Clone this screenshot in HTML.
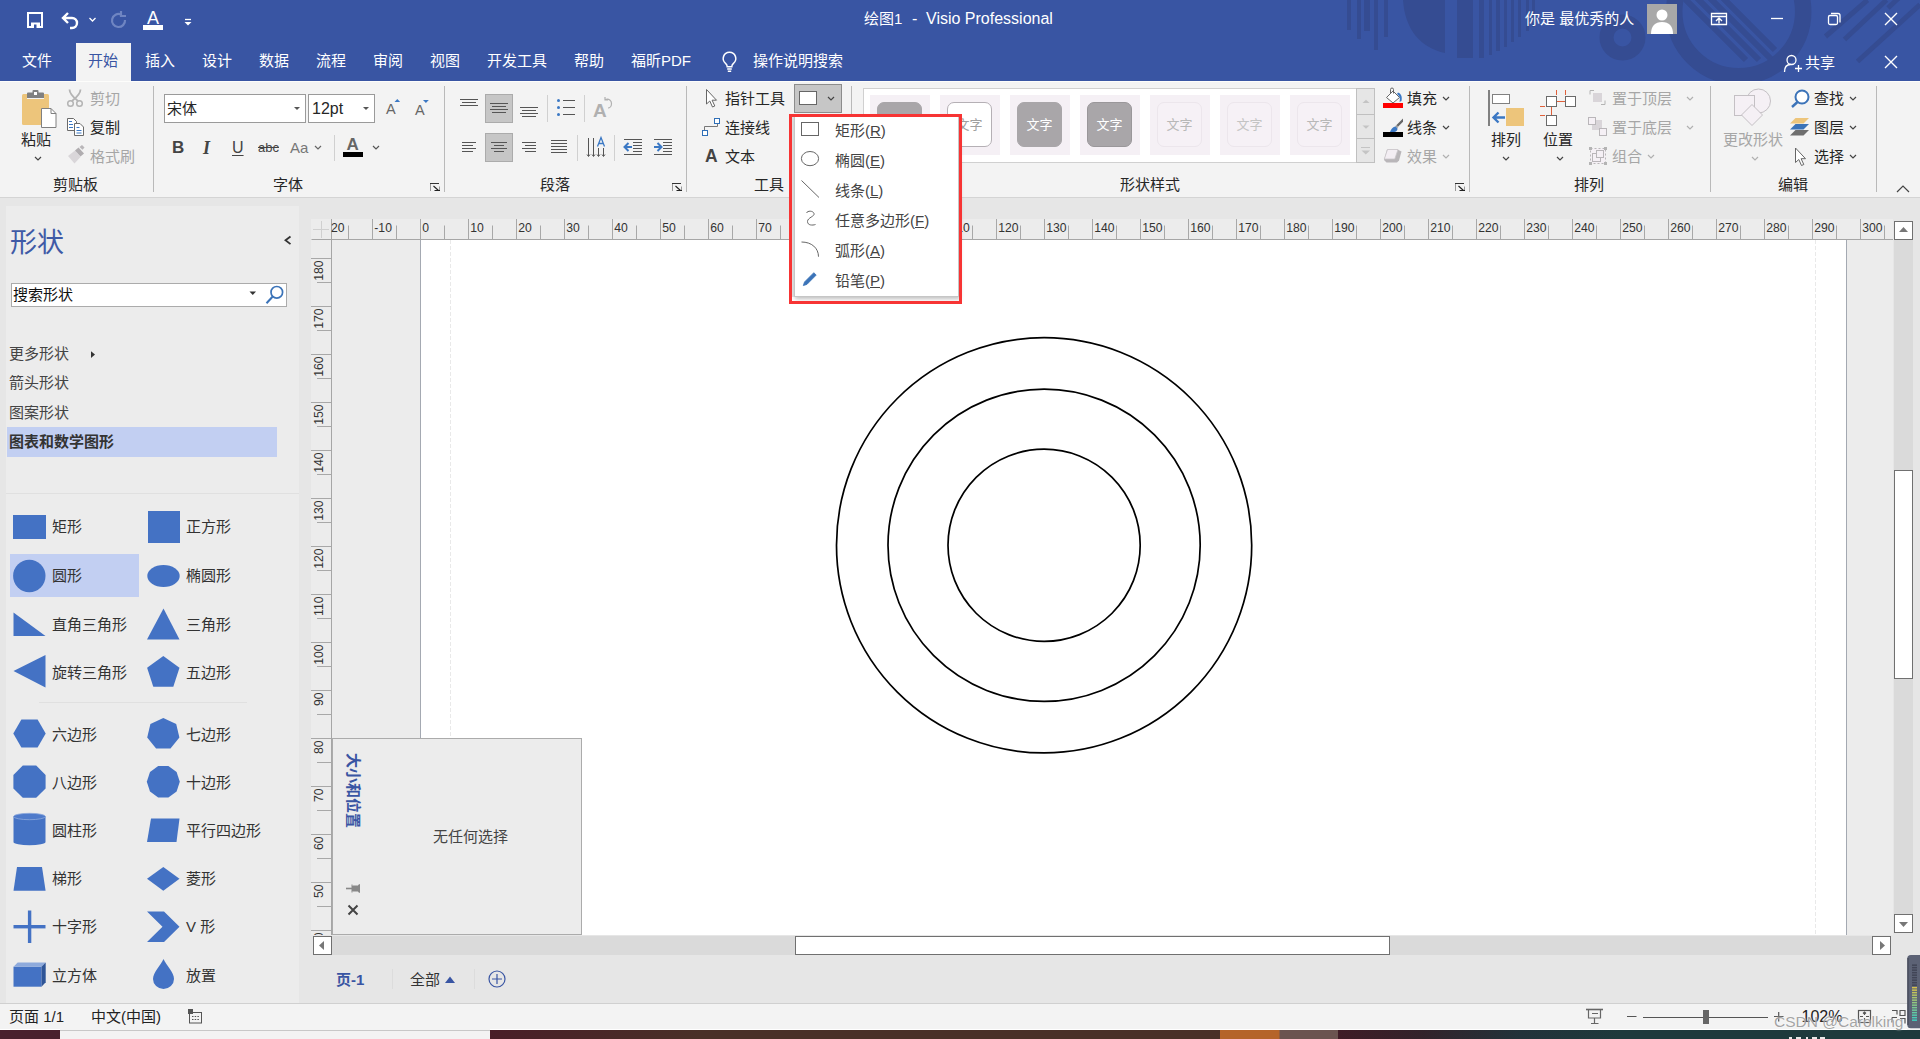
<!DOCTYPE html>
<html lang="zh-CN">
<head>
<meta charset="utf-8">
<title>绘图1 - Visio Professional</title>
<style>
*{box-sizing:border-box;margin:0;padding:0}
html,body{width:1920px;height:1039px;overflow:hidden;background:#e6e6e6}
body{position:relative;font-family:"Liberation Sans","Noto Sans CJK SC",sans-serif;font-size:15px;color:#262626;line-height:1}
.a{position:absolute}
.t{position:absolute;white-space:nowrap;line-height:20px;height:20px}
svg{position:absolute;overflow:visible}
#hdr{left:0;top:0;width:1920px;height:81px;background:#3955a3;overflow:hidden}
#hdr .t{color:#fff}
#rib{left:0;top:81px;width:1920px;height:117px;background:#f3f3f3;border-bottom:1px solid #d4d4d4}
.sep{position:absolute;top:5px;width:1px;height:105px;background:#c8c8c8}
.dis{color:#a6a6a6}
.gl{top:94px;color:#262626}
/* left panel */
#lp{left:4px;top:206px;width:295px;height:797px;background:#ececec}
/* canvas */
#ws{left:311px;top:219px;width:1582px;height:716px;background:#ececec}
</style>
</head>
<body>
<!--HDR-->
<div id="hdr" class="a">
<svg style="left:0;top:0" width="1920" height="81" viewBox="0 0 1920 81">
<defs><clipPath id="hc"><circle cx="1738.700" cy="11.700" r="56.500"/></clipPath></defs>
<g fill="#354c92" stroke="none">
<rect x="1347" y="0" width="4" height="30"/><rect x="1357" y="0" width="4" height="39"/><rect x="1364" y="0" width="6" height="31"/><rect x="1374" y="0" width="4" height="50"/><rect x="1384" y="0" width="4" height="37"/>
<path d="M1403 0c2 30 18 48 42 53v-53z"/><rect x="1457" y="0" width="16" height="58"/>
<rect x="1479" y="0" width="5" height="58"/><rect x="1489" y="0" width="3" height="55"/><rect x="1496" y="0" width="4" height="51"/><rect x="1504" y="0" width="3" height="47"/><rect x="1511" y="0" width="3" height="42"/><rect x="1518" y="0" width="3" height="37"/><rect x="1526" y="0" width="3" height="31"/><rect x="1532" y="0" width="3" height="27"/>
</g>
<g fill="none" stroke="#354c92">
<circle cx="1622.500" cy="37.500" r="16" stroke-width="14"/>
<circle cx="1738.700" cy="11.700" r="64.500" stroke-width="16.500"/>
<g stroke-width="6" clip-path="url(#hc)"><path d="M1666 -20l80 80M1679 -20l80 80M1692 -20l80 80M1705 -20l70 70"/></g>
<g stroke-width="5"><path d="M1867.500 0l-42 36.500M1886.500 0l-42 39.500M1920 4.500l-62.500 57M1920 -22l-32 30"/></g>
</g></svg>
<div class="a" style="left:76px;top:43px;width:55px;height:38px;background:#f3f3f3"></div>
<div class="t" style="left:88px;top:51px;color:#3955a3">开始</div>
<div class="t" style="left:22px;top:51px">文件</div>
<div class="t" style="left:145px;top:51px">插入</div>
<div class="t" style="left:202px;top:51px">设计</div>
<div class="t" style="left:259px;top:51px">数据</div>
<div class="t" style="left:316px;top:51px">流程</div>
<div class="t" style="left:373px;top:51px">审阅</div>
<div class="t" style="left:430px;top:51px">视图</div>
<div class="t" style="left:487px;top:51px">开发工具</div>
<div class="t" style="left:574px;top:51px">帮助</div>
<div class="t" style="left:631px;top:51px">福昕PDF</div>
<div class="t" style="left:753px;top:51px">操作说明搜索</div>
<div class="t" style="left:864px;top:9px">绘图1</div><div class="t" style="left:912px;top:9px;font-size:16px">-</div><div class="t" style="left:926px;top:9px;font-size:16px">Visio Professional</div>
<div class="t" style="left:1525px;top:9px">你是 最优秀的人</div>
<div class="t" style="left:1805px;top:53px">共享</div>
<svg style="left:0;top:0" width="1920" height="81" viewBox="0 0 1920 81" fill="none" stroke="#fff">
<!-- save -->
<path d="M28 13h14v14h-14z" stroke-width="2"/><path d="M31 28v-5.500h9v5.500z" fill="#fff" stroke="none"/><rect x="34" y="24.500" width="2.500" height="3.500" fill="#3955a3" stroke="none"/>
<!-- undo -->
<path d="M68 13l-5 5 5 5M63.5 18h8.500a5 5 0 0 1 0 10h-2" stroke-width="2.4"/>
<path d="M89.500 18l3 3 3-3" stroke-width="1.300"/>
<!-- redo -->
<path d="M121 14.500a6.500 6.500 0 1 0 4 5.500M121 11v5h5" stroke="#6f85c2" stroke-width="2.200"/>
<!-- A underline -->
<rect x="143" y="25" width="20" height="5" fill="#fff" stroke="none"/>
<!-- customize -->
<path d="M185 19.500h6" stroke-width="1.300"/><path d="M184.500 22h7l-3.500 3.500z" fill="#fff" stroke="none"/>
<!-- bulb -->
<path d="M729.500 52.300a6.200 6.200 0 0 0-4 11c1.200 1 1.700 1.900 1.700 3.400h4.600c0-1.500.5-2.400 1.700-3.400a6.200 6.200 0 0 0-4-11zM727.200 69h4.600M727.800 71.300h3.400" stroke-width="1.500"/>
<!-- avatar -->
<rect x="1647" y="4" width="30" height="30" fill="#a8a8a8" stroke="none"/>
<circle cx="1662" cy="15" r="5.500" fill="#fff" stroke="none"/><path d="M1651 34c0-8 4-12 11-12s11 4 11 12z" fill="#fff" stroke="none"/>
<!-- ribbon display -->
<path d="M1711.500 13.500h15v11h-15zM1711.500 16.500h15" stroke-width="1.300"/><path d="M1719 23.500v-5.500M1716 21l3-3 3 3" stroke-width="1.400"/>
<!-- minimize -->
<path d="M1771 18.500h12" stroke-width="1.300"/>
<!-- restore -->
<rect x="1828.500" y="15.500" width="9" height="9" rx="1.500" stroke-width="1.300"/><path d="M1831 13.500h7a2 2 0 0 1 2 2v7" stroke-width="1.300"/>
<!-- close -->
<path d="M1885 13l12 12M1897 13l-12 12" stroke-width="1.400"/>
<path d="M1885 56l12 12M1897 56l-12 12" stroke-width="1.400"/>
<!-- share person -->
<circle cx="1791.500" cy="60" r="4.500" stroke-width="1.300"/><path d="M1784.500 72c0-5 2.500-7.500 6-7.500M1795 68.500h7M1798.500 65v7" stroke-width="1.300"/>
</svg>
<div class="t" style="left:147px;top:7px;font-size:18px;line-height:22px;height:22px">A</div>
</div>
<!--RIB-->
<div id="rib" class="a">
<!--RIBCONTENT-->
</div>
<!--RC0--><div class="a" id="rc" style="left:0;top:0;width:1920px;height:200px">
<div class="a" style="left:0px;top:81px;width:1920px;height:1px;background:#fdfdfb"></div>
<div class="a" style="left:153px;top:86px;width:1px;height:106px;background:#b9b9b9"></div>
<div class="a" style="left:444px;top:86px;width:1px;height:106px;background:#b9b9b9"></div>
<div class="a" style="left:686px;top:86px;width:1px;height:106px;background:#b9b9b9"></div>
<div class="a" style="left:851px;top:86px;width:1px;height:106px;background:#b9b9b9"></div>
<div class="a" style="left:1469px;top:86px;width:1px;height:106px;background:#b9b9b9"></div>
<div class="a" style="left:1710px;top:86px;width:1px;height:106px;background:#b9b9b9"></div>
<div class="a" style="left:1876px;top:86px;width:1px;height:106px;background:#b9b9b9"></div>
<div class="t " style="left:53px;top:175px;">剪贴板</div>
<div class="t " style="left:273px;top:175px;">字体</div>
<div class="t " style="left:540px;top:175px;">段落</div>
<div class="t " style="left:754px;top:175px;">工具</div>
<div class="t " style="left:1120px;top:175px;">形状样式</div>
<div class="t " style="left:1574px;top:175px;">排列</div>
<div class="t " style="left:1778px;top:175px;">编辑</div>
<div class="t " style="left:21px;top:130px;">粘贴</div>
<div class="t dis" style="left:90px;top:89px;">剪切</div>
<div class="t " style="left:90px;top:117.5px;">复制</div>
<div class="t dis" style="left:90px;top:147px;">格式刷</div>
<div class="a" style="left:164px;top:94px;width:142px;height:29px;background:#fff;border:1px solid #9a9a9a"></div>
<div class="a" style="left:308px;top:94px;width:67px;height:29px;background:#fff;border:1px solid #9a9a9a"></div>
<div class="t " style="left:167px;top:99px;">宋体</div>
<div class="t " style="left:312px;top:99px;font-size:16px">12pt</div>
<div class="t " style="left:172px;top:138px;font-weight:bold;font-size:17px;color:#444">B</div>
<div class="t " style="left:203px;top:138px;font-family:'Liberation Serif',serif;font-style:italic;font-weight:bold;font-size:18px;color:#444">I</div>
<div class="t " style="left:232px;top:138px;font-size:16px;color:#444;text-decoration:underline;text-underline-offset:2px">U</div>
<div class="t " style="left:258px;top:138px;font-size:13px;color:#444;text-decoration:line-through">abc</div>
<div class="t " style="left:290px;top:138px;font-size:15px;color:#777">Aa</div>
<div class="t " style="left:386px;top:99px;font-size:14.5px;color:#666">A</div>
<div class="t " style="left:415px;top:100px;font-size:14.5px;color:#666">A</div>
<div class="t " style="left:346.5px;top:135px;font-size:17px;font-weight:bold;color:#666">A</div>
<div class="a" style="left:343px;top:152px;width:20px;height:5px;background:#000"></div>
<div class="a" style="left:334px;top:135px;width:1px;height:26px;background:#d0d0d0"></div>
<div class="a" style="left:485px;top:94px;width:28px;height:29px;background:#c6c6c6;border:1px solid #ababab"></div>
<div class="a" style="left:485px;top:133px;width:28px;height:29px;background:#c6c6c6;border:1px solid #ababab"></div>
<div class="a" style="left:547px;top:95px;width:1px;height:27px;background:#d0d0d0"></div>
<div class="a" style="left:584px;top:95px;width:1px;height:27px;background:#d0d0d0"></div>
<div class="a" style="left:577px;top:135px;width:1px;height:26px;background:#d0d0d0"></div>
<div class="a" style="left:614px;top:135px;width:1px;height:26px;background:#d0d0d0"></div>
<div class="t " style="left:725px;top:89px;">指针工具</div>
<div class="t " style="left:725px;top:118px;">连接线</div>
<div class="t " style="left:725px;top:147px;">文本</div>
<div class="t " style="left:705px;top:146px;font-weight:bold;font-size:17.5px;color:#444">A</div>
<div class="t " style="left:593px;top:100.5px;font-weight:bold;font-size:19px;color:#b0b0b0">A</div>
<div class="a" style="left:794px;top:84px;width:48px;height:29px;background:#c6c6c6;border:1px solid #8c8c8c"></div>
<div class="a" style="left:799px;top:91px;width:18px;height:14px;background:#fff;border:1px solid #666"></div>
<div class="a" style="left:863px;top:88px;width:494px;height:75px;background:#fff;border:1px solid #d0d0d0"></div>
<div class="a" style="left:1356px;top:88px;width:19px;height:27px;background:#e6e6e6;border:1px solid #c0c0c0"></div>
<div class="a" style="left:1356px;top:114px;width:19px;height:25px;background:#e6e6e6;border:1px solid #c0c0c0"></div>
<div class="a" style="left:1356px;top:138px;width:19px;height:25px;background:#e6e6e6;border:1px solid #c0c0c0"></div>
<div class="a" style="left:870px;top:95px;width:60px;height:60px;background:#f5f0f5"></div>
<div class="a" style="left:877px;top:102px;width:45px;height:45px;background:#a9a6a9;border:1px solid #a9a6a9;border-radius:7px;color:#fff;font-size:13px;line-height:43px;text-align:center">文字</div>
<div class="a" style="left:940px;top:95px;width:60px;height:60px;background:#f5f0f5"></div>
<div class="a" style="left:947px;top:102px;width:45px;height:45px;background:#fff;border:1px solid #b5b0b5;border-radius:7px;color:#a0a0a0;font-size:13px;line-height:43px;text-align:center">文字</div>
<div class="a" style="left:1010px;top:95px;width:60px;height:60px;background:#f5f0f5"></div>
<div class="a" style="left:1017px;top:102px;width:45px;height:45px;background:#a9a6a9;border:1px solid #a9a6a9;border-radius:7px;color:#fff;font-size:13px;line-height:43px;text-align:center">文字</div>
<div class="a" style="left:1080px;top:95px;width:60px;height:60px;background:#f5f0f5"></div>
<div class="a" style="left:1087px;top:102px;width:45px;height:45px;background:#a9a6a9;border:1px solid #9a979a;border-radius:7px;color:#fff;font-size:13px;line-height:43px;text-align:center">文字</div>
<div class="a" style="left:1150px;top:95px;width:60px;height:60px;background:#f5f0f5"></div>
<div class="a" style="left:1157px;top:102px;width:45px;height:45px;background:#f6f1f6;border:1px solid #ece6ec;border-radius:7px;color:#b8b8b8;font-size:13px;line-height:43px;text-align:center">文字</div>
<div class="a" style="left:1220px;top:95px;width:60px;height:60px;background:#f5f0f5"></div>
<div class="a" style="left:1227px;top:102px;width:45px;height:45px;background:#f6f1f6;border:1px solid #ece6ec;border-radius:7px;color:#c4c4c4;font-size:13px;line-height:43px;text-align:center">文字</div>
<div class="a" style="left:1290px;top:95px;width:60px;height:60px;background:#f5f0f5"></div>
<div class="a" style="left:1297px;top:102px;width:45px;height:45px;background:#f6f1f6;border:1px solid #ece6ec;border-radius:7px;color:#b8b8b8;font-size:13px;line-height:43px;text-align:center">文字</div>
<div class="t " style="left:1407px;top:89px;">填充</div>
<div class="t " style="left:1407px;top:118px;">线条</div>
<div class="t dis" style="left:1407px;top:147px;">效果</div>
<div class="t " style="left:1491px;top:130px;">排列</div>
<div class="t " style="left:1543px;top:130px;">位置</div>
<div class="t dis" style="left:1612px;top:89px;">置于顶层</div>
<div class="t dis" style="left:1612px;top:118px;">置于底层</div>
<div class="t dis" style="left:1612px;top:147px;">组合</div>
<div class="t dis" style="left:1723px;top:130px;">更改形状</div>
<div class="t " style="left:1814px;top:89px;">查找</div>
<div class="t " style="left:1814px;top:118px;">图层</div>
<div class="t " style="left:1814px;top:147px;">选择</div>
<!--RIBSVG--><svg style="left:0;top:0" width="1920" height="200" viewBox="0 0 1920 200">
<rect x="22" y="94" width="27" height="31" rx="1.500" fill="#edc57b"/>
<path d="M27 98.500v-5a1 1 0 0 1 1-1h4.500v-1.500a1 1 0 0 1 1-1h4a1 1 0 0 1 1 1v1.500h4.500a1 1 0 0 1 1 1v5z" fill="#808080"/><rect x="34" y="92" width="3" height="3" fill="#fff"/><rect x="27" y="98" width="17" height="1" fill="#f3f3f3"/>
<path d="M41.500 108.500h9.500l5 5v14h-14.500z" fill="#fff" stroke="#808080" stroke-width="1"/><path d="M51 108.500v5h5" fill="none" stroke="#808080" stroke-width="1"/>
<path d="M35 157.0l3 3 3-3" fill="none" stroke="#444" stroke-width="1.200"/>
<g fill="none" stroke="#b4b4b4" stroke-width="1.500"><circle cx="70.500" cy="103.500" r="2.800"/><circle cx="79.500" cy="103.500" r="2.800"/><path d="M69.500 89.500c0 4 4 8 8.500 11.500M80.500 89.500c0 4-4 8-8.500 11.500" stroke-width="1.800"/></g>
<g fill="#fff" stroke="#6a6a6a" stroke-width="1"><path d="M67.500 118.500h6l3 3v9h-9z"/><path d="M74.500 123.500h5.500l3.500 3.500v8.500h-9z"/></g><g stroke="#3b78c4" stroke-width="1"><path d="M69 121.500h3M69 124.500h4M69 127.500h4M76.500 127.500h3M76.500 130.500h5M76.500 133h5"/></g>
<path d="M68 156l7-5.500 5.500 6.500-6 6.500z" fill="#d9d6d9"/><path d="M75 150.500l3.500-3 5.500 6-3.500 3z" fill="#b0adb0"/><path d="M79.500 147l2.500-2 2.500 2.500-2 2.200z" fill="#b9b6b9"/>
<path d="M294 107h6l-3 3z" fill="#555"/>
<path d="M363 107h6l-3 3z" fill="#555"/>
<path d="M394.500 102l2.800-3 2.800 3z" fill="#3b78c4"/><path d="M423 100h5.800l-2.900 3z" fill="#3b78c4"/>
<path d="M315 146.0l3 3 3-3" fill="none" stroke="#666" stroke-width="1.200"/>
<path d="M373 146.0l3 3 3-3" fill="none" stroke="#555" stroke-width="1.200"/>
<path d="M430 183.5h9" stroke="#333" stroke-width="1" fill="none"/><path d="M430.5 184.0v7M439.5 186.5v4.500" stroke="#999" stroke-width="1" fill="none"/><path d="M433.5 186.0l5 4.500M434.5 190.5h5.500" stroke="#222" stroke-width="1.100" fill="none"/>
<path d="M672 183.5h9" stroke="#333" stroke-width="1" fill="none"/><path d="M672.5 184.0v7M681.5 186.5v4.500" stroke="#999" stroke-width="1" fill="none"/><path d="M675.5 186.0l5 4.500M676.5 190.5h5.500" stroke="#222" stroke-width="1.100" fill="none"/>
<path d="M1455 183.5h9" stroke="#333" stroke-width="1" fill="none"/><path d="M1455.5 184.0v7M1464.5 186.5v4.500" stroke="#999" stroke-width="1" fill="none"/><path d="M1458.5 186.0l5 4.500M1459.5 190.5h5.500" stroke="#222" stroke-width="1.100" fill="none"/>
<path d="M460 99.5H478" stroke="#555" stroke-width="1"/>
<path d="M462 102.5H476" stroke="#555" stroke-width="1"/>
<path d="M460 105.5H478" stroke="#555" stroke-width="1"/>
<path d="M490 103.5H508" stroke="#555" stroke-width="1"/>
<path d="M492 106.5H506" stroke="#555" stroke-width="1"/>
<path d="M490 109.5H508" stroke="#555" stroke-width="1"/>
<path d="M492 112.5H506" stroke="#555" stroke-width="1"/>
<path d="M520 107.5H538" stroke="#555" stroke-width="1"/>
<path d="M522 110.5H536" stroke="#555" stroke-width="1"/>
<path d="M520 113.5H538" stroke="#555" stroke-width="1"/>
<path d="M522 116.5H536" stroke="#555" stroke-width="1"/>
<circle cx="558.500" cy="100.5" r="1.500" fill="#3b78c4"/>
<path d="M563 100.5H575" stroke="#555" stroke-width="1"/>
<circle cx="558.500" cy="107.5" r="1.500" fill="#3b78c4"/>
<path d="M563 107.5H575" stroke="#555" stroke-width="1"/>
<circle cx="558.500" cy="114.5" r="1.500" fill="#3b78c4"/>
<path d="M563 114.5H575" stroke="#555" stroke-width="1"/>
<path d="M605.500 99.500c3.500-1 6 1 6 4s-2 4.500-3.500 4.500M605 97v3h3" fill="none" stroke="#b0b0b0" stroke-width="1.200"/>
<path d="M462 142.5H476" stroke="#555" stroke-width="1"/>
<path d="M462 145.5H473" stroke="#555" stroke-width="1"/>
<path d="M462 148.5H476" stroke="#555" stroke-width="1"/>
<path d="M462 151.5H473" stroke="#555" stroke-width="1"/>
<path d="M491 142.5H507" stroke="#555" stroke-width="1"/>
<path d="M494 145.5H504" stroke="#555" stroke-width="1"/>
<path d="M491 148.5H507" stroke="#555" stroke-width="1"/>
<path d="M494 151.5H504" stroke="#555" stroke-width="1"/>
<path d="M522 142.5H536" stroke="#555" stroke-width="1"/>
<path d="M525 145.5H536" stroke="#555" stroke-width="1"/>
<path d="M522 148.5H536" stroke="#555" stroke-width="1"/>
<path d="M525 151.5H536" stroke="#555" stroke-width="1"/>
<path d="M551 140.5H567" stroke="#555" stroke-width="1"/>
<path d="M551 143.5H567" stroke="#555" stroke-width="1"/>
<path d="M551 146.5H567" stroke="#555" stroke-width="1"/>
<path d="M551 149.5H567" stroke="#555" stroke-width="1"/>
<path d="M551 152.5H567" stroke="#555" stroke-width="1"/>
<g stroke="#555" stroke-width="1" fill="none"><path d="M588.500 138v18M593.500 138v18M598.500 148v8M603.500 148v8"/><path d="M587 154.500l1.500 2 1.500-2M592 154.500l1.500 2 1.500-2M597 154.500l1.500 2 1.500-2M602 154.500l1.500 2 1.500-2"/></g>
<path d="M597.500 146.500l3.500-9 3.500 9M598.800 143.500h4.400" fill="none" stroke="#3b78c4" stroke-width="1.300"/>
<path d="M624 139.5H642" stroke="#555" stroke-width="1"/>
<path d="M624 154.5H642" stroke="#555" stroke-width="1"/>
<path d="M633 142.5H642" stroke="#555" stroke-width="1"/>
<path d="M633 145.5H642" stroke="#555" stroke-width="1"/>
<path d="M633 148.5H642" stroke="#555" stroke-width="1"/>
<path d="M633 151.5H642" stroke="#555" stroke-width="1"/>
<path d="M654 139.5H672" stroke="#555" stroke-width="1"/>
<path d="M654 154.5H672" stroke="#555" stroke-width="1"/>
<path d="M663 142.5H672" stroke="#555" stroke-width="1"/>
<path d="M663 145.5H672" stroke="#555" stroke-width="1"/>
<path d="M663 148.5H672" stroke="#555" stroke-width="1"/>
<path d="M663 151.5H672" stroke="#555" stroke-width="1"/>
<path d="M632 147h-7M628.500 143l-4 4 4 4" fill="none" stroke="#3b78c4" stroke-width="2"/>
<path d="M654 147h7M657.500 143l4 4-4 4" fill="none" stroke="#3b78c4" stroke-width="2"/>
<path d="M706.500 89.500v14.500l3.300-3 2.700 6 2.300-1-2.700-5.800h4.400z" fill="#fff" stroke="#666" stroke-width="1"/>
<path d="M704.500 130v-3.500h13v-3" fill="none" stroke="#777" stroke-width="1"/><rect x="714.500" y="118.500" width="5" height="5" fill="#fff" stroke="#2f6fb7"/><rect x="702.500" y="130.500" width="5" height="5" fill="#fff" stroke="#2f6fb7"/>
<path d="M828 97.0l3 3 3-3" fill="none" stroke="#444" stroke-width="1.200"/>
<path d="M1362.500 103l3.500-3.300 3.500 3.300z" fill="#c4c4c4"/><path d="M1362.500 125.500h7l-3.500 3.300z" fill="#c4c4c4"/><path d="M1361 147.500h9" stroke="#c4c4c4"/><path d="M1361.500 150.500h8.500l-4.250 4z" fill="#c4c4c4"/>
<rect x="1383" y="103" width="20" height="5" fill="#f00"/><path d="M1386.500 97.500l6.500-6.500 6.500 6.500-6.500 5.500z" fill="#fff" stroke="#666" stroke-width="1"/><path d="M1393.500 93.500v-4a1.500 1.500 0 0 0-3 0v3.500" fill="none" stroke="#666" stroke-width="1"/><path d="M1398 92.500c3 1 4.500 4 3.500 8.500l-2 1c1-4 0-6-2.500-8z" fill="#3b78c4"/>
<path d="M1443 97.0l3 3 3-3" fill="none" stroke="#444" stroke-width="1.200"/>
<rect x="1383" y="132" width="20" height="5" fill="#000"/><path d="M1403 118.500l-6.500 6.500 1.500 1.800 5-5z" fill="#666"/><path d="M1396.500 125l1.800 2-1.300 1.300-1.800-2z" fill="#999"/><path d="M1390 132c1-3 3-5.500 5.500-5.500l2 2c0 2-1.500 3.500-3.500 3.500z" fill="#3b78c4"/>
<path d="M1443 126.0l3 3 3-3" fill="none" stroke="#444" stroke-width="1.200"/>
<path d="M1387 149.500h10.500l4 2-2.500 9-2 2h-10.500l-2.500-2.500z" fill="#b9b6b9"/><path d="M1387.500 149.500h10.500l-3.200 9.500h-10.500z" fill="#f3eef3" stroke="#c9c5c9" stroke-width=".8"/>
<path d="M1443 155.0l3 3 3-3" fill="none" stroke="#b0b0b0" stroke-width="1.200"/>
<rect x="1488" y="90" width="2" height="36" fill="#808080"/><rect x="1492.500" y="94.500" width="17" height="9" fill="#fff" stroke="#808080"/><rect x="1506" y="108" width="18" height="18" fill="#edc57b"/><path d="M1505 117.500h-11M1498.500 112.500l-5 5 5 5" fill="none" stroke="#3b78c4" stroke-width="2.400"/>
<path d="M1503 157.0l3 3 3-3" fill="none" stroke="#444" stroke-width="1.200"/>
<g stroke="#e0603a" stroke-width="1" fill="none"><path d="M1557 101.500h8M1551.500 106.500v9M1556.500 90v5M1565.500 90v5M1540 106.500h5M1540 115.500h5"/></g><g fill="#fff" stroke="#6a6a6a" stroke-width="1"><rect x="1546.500" y="96.500" width="10" height="10"/><rect x="1565.500" y="96.500" width="10" height="10"/><rect x="1546.500" y="115.500" width="10" height="10"/></g>
<path d="M1557 157.0l3 3 3-3" fill="none" stroke="#444" stroke-width="1.200"/>
<rect x="1593" y="93" width="9" height="9" fill="#d9d5d9"/><path d="M1590 94.500v-4h4M1601 104.500h4v-4" fill="none" stroke="#b4b4b4" stroke-width="1"/>
<rect x="1592" y="120" width="10" height="10" fill="#d9d5d9"/><rect x="1588.500" y="117.500" width="7" height="7" fill="#f5f0f5" stroke="#b9b6b9"/><rect x="1599.500" y="128.500" width="7" height="7" fill="#f5f0f5" stroke="#b9b6b9"/>
<g fill="#f5f0f5" stroke="#b9b6b9"><rect x="1590.500" y="148.500" width="15" height="15" stroke-dasharray="2 2"/><rect x="1592.500" y="153.500" width="8" height="8"/><rect x="1596.500" y="150.500" width="7" height="7"/></g><g fill="#b4b4b4"><rect x="1589" y="147" width="3" height="3"/><rect x="1604" y="147" width="3" height="3"/><rect x="1589" y="162" width="3" height="3"/><rect x="1604" y="162" width="3" height="3"/></g>
<path d="M1687 97.0l3 3 3-3" fill="none" stroke="#b0b0b0" stroke-width="1.200"/>
<path d="M1687 126.0l3 3 3-3" fill="none" stroke="#b0b0b0" stroke-width="1.200"/>
<path d="M1648 155.0l3 3 3-3" fill="none" stroke="#b0b0b0" stroke-width="1.200"/>
<g fill="#f5f0f5" stroke="#c4c0c4" stroke-width="1"><circle cx="1758.500" cy="101" r="12"/><rect x="1734.500" y="95.500" width="20" height="20"/><path d="M1752 104.500l10.500 10.500-10.500 10.500-10.500-10.500z"/></g>
<path d="M1752 157.0l3 3 3-3" fill="none" stroke="#b0b0b0" stroke-width="1.200"/>
<circle cx="1802" cy="97" r="6.500" fill="#fff" stroke="#3b73b8" stroke-width="2"/><path d="M1797.500 102l-5.500 5" stroke="#3b73b8" stroke-width="2.400"/>
<path d="M1795.500 118h13.500l-5.500 5.500h-13.500z" fill="#edc57b"/><path d="M1795.500 124h13.500l-5.500 5.500h-13.500z" fill="#3b73b8"/><path d="M1795.500 130h13.500l-5.500 5.500h-13.500z" fill="#6e6e6e"/>
<path d="M1795.500 148v14.500l3.300-3 2.700 6 2.300-1-2.700-5.800h4.400z" fill="#fff" stroke="#666" stroke-width="1"/>
<path d="M1850 97.0l3 3 3-3" fill="none" stroke="#444" stroke-width="1.200"/>
<path d="M1850 126.0l3 3 3-3" fill="none" stroke="#444" stroke-width="1.200"/>
<path d="M1850 155.0l3 3 3-3" fill="none" stroke="#444" stroke-width="1.200"/>
<path d="M1897 192l6-6 6 6" fill="none" stroke="#444" stroke-width="1.200"/>
</svg><!--/RIBSVG-->
</div><!--RC1-->
<!--LP-->
<div class="a" id="lpc" style="left:0;top:0;width:320px;height:1039px">
<div class="a" style="left:6px;top:206px;width:293px;height:797px;background:#ececec"></div>
<div class="t" style="left:10px;top:223px;height:40px;line-height:40px;font-size:27px;font-weight:400;color:#3f5aa6">形状</div>
<div class="a" style="left:11px;top:283px;width:276px;height:24px;background:#fff;border:1px solid #ababab"></div>
<div class="t" style="left:13px;top:285px;color:#111">搜索形状</div>
<div class="t" style="left:9px;top:343.5px;color:#444">更多形状</div>
<div class="t" style="left:9px;top:372.5px;color:#444">箭头形状</div>
<div class="t" style="left:9px;top:402.5px;color:#444">图案形状</div>
<div class="a" style="left:7px;top:427px;width:270px;height:30px;background:#c2cff2"></div>
<div class="t" style="left:9px;top:431.5px;font-weight:bold;color:#333">图表和数学图形</div>
<div class="a" style="left:6px;top:493px;width:293px;height:1px;background:#e0e0e0"></div>
<div class="a" style="left:10px;top:554px;width:129px;height:43px;background:#c2cff2"></div>
<div class="a" style="left:39px;top:702px;width:208px;height:1px;background:#e0e0e0"></div>
<div class="t" style="left:52px;top:517px;color:#333">矩形</div>
<div class="t" style="left:186px;top:517px;color:#333">正方形</div>
<div class="t" style="left:52px;top:566px;color:#333">圆形</div>
<div class="t" style="left:186px;top:566px;color:#333">椭圆形</div>
<div class="t" style="left:52px;top:614.5px;color:#333">直角三角形</div>
<div class="t" style="left:186px;top:614.5px;color:#333">三角形</div>
<div class="t" style="left:52px;top:662.5px;color:#333">旋转三角形</div>
<div class="t" style="left:186px;top:662.5px;color:#333">五边形</div>
<div class="t" style="left:52px;top:724.5px;color:#333">六边形</div>
<div class="t" style="left:186px;top:724.5px;color:#333">七边形</div>
<div class="t" style="left:52px;top:772.5px;color:#333">八边形</div>
<div class="t" style="left:186px;top:772.5px;color:#333">十边形</div>
<div class="t" style="left:52px;top:820.5px;color:#333">圆柱形</div>
<div class="t" style="left:186px;top:820.5px;color:#333">平行四边形</div>
<div class="t" style="left:52px;top:869px;color:#333">梯形</div>
<div class="t" style="left:186px;top:869px;color:#333">菱形</div>
<div class="t" style="left:52px;top:917px;color:#333">十字形</div>
<div class="t" style="left:186px;top:917px;color:#333">V 形</div>
<div class="t" style="left:52px;top:965.5px;color:#333">立方体</div>
<div class="t" style="left:186px;top:965.5px;color:#333">放置</div>
<svg style="left:0;top:0" width="320" height="1039" viewBox="0 0 320 1039" fill="#4472c4"><rect x="13" y="515" width="33" height="24"/><rect x="148" y="511" width="32" height="32"/>
<circle cx="29.300" cy="576" r="16.200"/><ellipse cx="163.500" cy="576" rx="16.200" ry="11"/>
<path d="M13.500 612.500v23.500h32z"/><path d="M163.500 608.500l16 31h-32.500z"/>
<path d="M13.500 671l32-16v32.500z"/>
<path d="M163.3 656.0L179.5 667.7L173.3 686.8L153.3 686.8L147.1 667.7z"/>
<path d="M45.7 733.5L37.6 747.4L21.4 747.4L13.3 733.5L21.4 719.6L37.6 719.6z"/>
<path d="M163.3 718.0L176.2 724.0L179.4 737.6L170.5 748.4L156.1 748.4L147.2 737.6L150.4 724.0z"/>
<path d="M45.6 788.4L36.2 797.8L22.8 797.8L13.4 788.4L13.4 775.0L22.8 765.6L36.2 765.6L45.6 775.0z"/>
<path d="M179.8 781.7L176.6 791.4L168.4 797.4L158.2 797.4L150.0 791.4L146.8 781.7L150.0 772.0L158.2 766.0L168.4 766.0L176.6 772.0z"/>
<path d="M13.500 816.500v25.500a16 3.200 0 0 0 32 0v-25.500z"/><ellipse cx="29.500" cy="816.500" rx="16" ry="3.200" fill="#4f7bcb" stroke="#8eaadc" stroke-width=".8"/>
<path d="M151 818.500h28.500l-3 23.500h-29.500z"/>
<path d="M17 867h25l3.600 23.700h-32.100z"/><path d="M163.300 867l16.200 11.800-16.200 11.900-16.300-11.900z"/>
<rect x="13.500" y="925" width="32" height="3.400"/><rect x="27.900" y="910.500" width="3.400" height="32.500"/>
<path d="M147 911.500h17l15.500 15.200-15.500 15.300h-17l15.500-15.300z"/>
<rect x="13.500" y="966.700" width="28" height="20"/><path d="M13.500 966.700l4.200-4.200h28l-4.200 4.200z" fill="#8eaadc"/><path d="M41.500 966.700l4.200-4.200v19.800l-4.200 4.400z" fill="#2f5597"/>
<path d="M163.500 959c3 7 10.500 13 10.500 20a10.500 10 0 0 1-21 0c0-7 7.500-13 10.500-20z"/>
<path d="M249.500 291.500h6.500l-3.250 3.500z" fill="#333"/><circle cx="276.800" cy="292.300" r="5.800" fill="none" stroke="#3b73b8" stroke-width="1.700"/><path d="M272.500 296.800l-6 6.500" stroke="#3b73b8" stroke-width="2" fill="none"/>
<path d="M290.500 236.500l-5 3.800 5 3.800" fill="none" stroke="#333" stroke-width="1.800"/>
<path d="M91 351.200l4 3.400-4 3.400z" fill="#333"/></svg>
</div>
<!--WS-->
<div class="a" id="wsc" style="left:0;top:0;width:1920px;height:1039px">
<div class="a" style="left:311px;top:219px;width:1582px;height:716px;background:#ececec"></div>
<div class="a" style="left:420px;top:240px;width:1427px;height:695px;background:#fff;border-left:1px solid #a4a9b2;border-right:1px solid #a4a9b2"></div>
<div class="a" style="left:450px;top:240px;width:1px;height:695px;background:repeating-linear-gradient(to bottom,#e9e9e9 0 4px,transparent 4px 6px)"></div>
<div class="a" style="left:1815px;top:240px;width:1px;height:695px;background:repeating-linear-gradient(to bottom,#e9e9e9 0 4px,transparent 4px 6px)"></div>
<svg style="left:0;top:0" width="1920" height="1039" viewBox="0 0 1920 1039"><defs><clipPath id="wc"><rect x="311" y="219" width="1582" height="716"/></clipPath></defs><g clip-path="url(#wc)"><path d="M311.500 239.500H1893M331.500 219v716" stroke="#a6a6a6" fill="none"/>
<path d="M313 229.500h16M321.500 221v17" stroke="#d0d0d0" fill="none"/>
<path d="M372.5 219v20M420.5 219v20M468.5 219v20M516.5 219v20M564.5 219v20M612.5 219v20M660.5 219v20M708.5 219v20M756.5 219v20M804.5 219v20M852.5 219v20M900.5 219v20M948.5 219v20M996.5 219v20M1044.5 219v20M1092.5 219v20M1140.5 219v20M1188.5 219v20M1236.5 219v20M1284.5 219v20M1332.5 219v20M1380.5 219v20M1428.5 219v20M1476.5 219v20M1524.5 219v20M1572.5 219v20M1620.5 219v20M1668.5 219v20M1716.5 219v20M1764.5 219v20M1812.5 219v20M1860.5 219v20M348.5 225.500v14M396.5 225.500v14M444.5 225.500v14M492.5 225.500v14M540.5 225.500v14M588.5 225.500v14M636.5 225.500v14M684.5 225.500v14M732.5 225.500v14M780.5 225.500v14M828.5 225.500v14M876.5 225.500v14M924.5 225.500v14M972.5 225.500v14M1020.5 225.500v14M1068.5 225.500v14M1116.5 225.500v14M1164.5 225.500v14M1212.5 225.500v14M1260.5 225.500v14M1308.5 225.500v14M1356.5 225.500v14M1404.5 225.500v14M1452.5 225.500v14M1500.5 225.500v14M1548.5 225.500v14M1596.5 225.500v14M1644.5 225.500v14M1692.5 225.500v14M1740.5 225.500v14M1788.5 225.500v14M1836.5 225.500v14M1884.5 225.500v14" stroke="#a8a8a8" fill="none"/>
<path d="M311 258.5h20M311 306.5h20M311 354.5h20M311 402.5h20M311 450.5h20M311 498.5h20M311 546.5h20M311 594.5h20M311 642.5h20M311 690.5h20M311 738.5h20M311 786.5h20M311 834.5h20M311 882.5h20M311 930.5h20M317 282.5h14.5M317 330.5h14.5M317 378.5h14.5M317 426.5h14.5M317 474.5h14.5M317 522.5h14.5M317 570.5h14.5M317 618.5h14.5M317 666.5h14.5M317 714.5h14.5M317 762.5h14.5M317 810.5h14.5M317 858.5h14.5M317 906.5h14.5" stroke="#a8a8a8" fill="none"/>
<g font-family="'Liberation Sans',sans-serif" font-size="12.2" fill="#333"><text x="331" y="231.600">20</text><text x="374.3" y="231.600">-10</text><text x="422.3" y="231.600">0</text><text x="470.3" y="231.600">10</text><text x="518.3" y="231.600">20</text><text x="566.3" y="231.600">30</text><text x="614.3" y="231.600">40</text><text x="662.3" y="231.600">50</text><text x="710.3" y="231.600">60</text><text x="758.3" y="231.600">70</text><text x="806.3" y="231.600">80</text><text x="854.3" y="231.600">90</text><text x="902.3" y="231.600">100</text><text x="950.3" y="231.600">110</text><text x="998.3" y="231.600">120</text><text x="1046.3" y="231.600">130</text><text x="1094.3" y="231.600">140</text><text x="1142.3" y="231.600">150</text><text x="1190.3" y="231.600">160</text><text x="1238.3" y="231.600">170</text><text x="1286.3" y="231.600">180</text><text x="1334.3" y="231.600">190</text><text x="1382.3" y="231.600">200</text><text x="1430.3" y="231.600">210</text><text x="1478.3" y="231.600">220</text><text x="1526.3" y="231.600">230</text><text x="1574.3" y="231.600">240</text><text x="1622.3" y="231.600">250</text><text x="1670.3" y="231.600">260</text><text x="1718.3" y="231.600">270</text><text x="1766.3" y="231.600">280</text><text x="1814.3" y="231.600">290</text><text x="1862.3" y="231.600">300</text><text transform="translate(323 260.5) rotate(-90)" text-anchor="end">180</text><text transform="translate(323 308.5) rotate(-90)" text-anchor="end">170</text><text transform="translate(323 356.5) rotate(-90)" text-anchor="end">160</text><text transform="translate(323 404.5) rotate(-90)" text-anchor="end">150</text><text transform="translate(323 452.5) rotate(-90)" text-anchor="end">140</text><text transform="translate(323 500.5) rotate(-90)" text-anchor="end">130</text><text transform="translate(323 548.5) rotate(-90)" text-anchor="end">120</text><text transform="translate(323 596.5) rotate(-90)" text-anchor="end">110</text><text transform="translate(323 644.5) rotate(-90)" text-anchor="end">100</text><text transform="translate(323 692.5) rotate(-90)" text-anchor="end">90</text><text transform="translate(323 740.5) rotate(-90)" text-anchor="end">80</text><text transform="translate(323 788.5) rotate(-90)" text-anchor="end">70</text><text transform="translate(323 836.5) rotate(-90)" text-anchor="end">60</text><text transform="translate(323 884.5) rotate(-90)" text-anchor="end">50</text><text transform="translate(323 932.5) rotate(-90)" text-anchor="end">40</text></g>
<g fill="none" stroke="#000" stroke-width="1.700"><circle cx="1044.100" cy="545.300" r="207.600"/><circle cx="1044.100" cy="545.300" r="156.100"/><circle cx="1044.100" cy="545.300" r="96.100"/></g></g></svg>
<div class="a" style="left:332px;top:738px;width:250px;height:197px;background:#ececec;border:1px solid #ababab"></div>
<div class="t" style="left:353px;top:743px;transform-origin:0 0;transform:rotate(90deg) translate(10px,-10px);font-weight:bold;color:#3955a3">大小和位置</div>
<div class="t" style="left:433px;top:827px;color:#444">无任何选择</div>
<div class="a" style="left:1894px;top:221px;width:19px;height:693px;background:#dadada"></div>
<div class="a" style="left:1894px;top:221px;width:19px;height:19px;background:#fff;border:1px solid #707070"></div>
<div class="a" style="left:1894px;top:470px;width:19px;height:209px;background:#fff;border:1px solid #707070"></div>
<div class="a" style="left:1894px;top:914px;width:19px;height:19px;background:#fff;border:1px solid #707070"></div>
<div class="a" style="left:313px;top:936px;width:1578px;height:19px;background:#dadada"></div>
<div class="a" style="left:313px;top:936px;width:19px;height:19px;background:#fff;border:1px solid #707070"></div>
<div class="a" style="left:795px;top:936px;width:595px;height:19px;background:#fff;border:1px solid #707070"></div>
<div class="a" style="left:1872px;top:936px;width:19px;height:19px;background:#fff;border:1px solid #707070"></div>
<div class="t" style="left:336px;top:969.5px;font-weight:bold;color:#3955a3">页-1</div>
<div class="t" style="left:410px;top:969.5px;color:#333">全部</div>
<div class="a" style="left:392px;top:969px;width:1px;height:20px;background:#dcdcdc"></div>
<div class="a" style="left:474px;top:969px;width:1px;height:20px;background:#dcdcdc"></div>
<div class="a" style="left:0px;top:1003px;width:1920px;height:27px;background:#f3f3f3;border-top:1px solid #d0d0d0"></div>
<div class="t" style="left:9px;top:1007px;color:#222">页面 1/1</div>
<div class="t" style="left:91px;top:1007px;color:#222">中文(中国)</div>
<div class="t" style="left:1801.5px;top:1007px;color:#222;font-size:16px">102%</div>
<div class="a" style="left:0px;top:1029px;width:60px;height:1px;background:#fff"></div>
<div class="a" style="left:490px;top:1029px;width:1417px;height:1px;background:#fff"></div>
<div class="a" style="left:0px;top:1030px;width:1920px;height:9px;background:linear-gradient(to right,#4a202d 0,#4a202d 60px,#f3f3f3 60px,#f3f3f3 490px,#4a1e28 490px,#4a3028 700px,#4a3028 1220px,#b5642a 1220px,#b5642a 1279px,#6b5450 1280px,#6b5450 1338px,#3f1c26 1338px,#33222a 1420px,#22323a 1520px,#1e3a3c 1620px,#1e3a3c 1920px)"></div>
<div class="a" style="left:60px;top:1030px;width:430px;height:1px;background:#c8c8c8"></div>
<svg style="left:0;top:0" width="1920" height="1039" viewBox="0 0 1920 1039"><path d="M1899 232h9l-4.500-5z" fill="#777"/><path d="M1899 922h9l-4.500 5z" fill="#777"/><path d="M324 941v9l-5-4.500z" fill="#777"/><path d="M1880 941v9l5-4.500z" fill="#777"/>
<path d="M445 983h10l-5-6.500z" fill="#3955a3"/><circle cx="497" cy="979" r="8" fill="none" stroke="#3955a3" stroke-width="1.200"/><path d="M492 979h10M497 974v10" stroke="#3955a3" stroke-width="1.200"/>
<path d="M346 888.500h6" stroke="#888" stroke-width="1.600"/><path d="M352 884.500v8M352.500 886h5l2-1.500v8l-2-1.500h-5z" fill="#888" stroke="#888" stroke-width="1"/><path d="M348.500 905.500l9 9M357.500 905.500l-9 9" stroke="#444" stroke-width="2"/>
<g fill="none" stroke="#555" stroke-width="1"><rect x="189.500" y="1012.500" width="12" height="10.500"/><path d="M192 1016.500h7M192 1019.500h7" stroke-dasharray="1.500 1.200"/></g><rect x="188" y="1009" width="5" height="5" fill="#555"/>
<g fill="none" stroke="#666" stroke-width="1.200"><path d="M1586 1009.500h17" stroke-width="1.600"/><path d="M1588.500 1010v8h12v-8M1592 1013.500h6M1594.500 1018v5M1591 1023.500h7.500"/></g>
<path d="M1627 1016.500h9.500M1643 1017.500h125M1774 1016.500h9.500M1778.700 1012v9.500" stroke="#555" stroke-width="1.200"/><rect x="1703" y="1010" width="6" height="14" fill="#666"/>
<g fill="none" stroke="#555" stroke-width="1.200"><rect x="1858.500" y="1010.500" width="12" height="12"/><path d="M1864.500 1012v3M1863 1013.500l1.500-1.500 1.500 1.500M1860 1016.500h3M1866 1016.500h3M1864.500 1018v3"/><path d="M1892 1010.500h5v4M1892 1022.500v-5M1892 1017.500h5M1900 1010.500h5v5h-5zM1900 1018.500h5v5"/></g>
<rect x="1907.300" y="955" width="16" height="73.200" rx="3.500" fill="#5c6275"/><rect x="1907.300" y="958" width="1.500" height="67" fill="#4a4f5e"/><rect x="1912" y="964.4" width="5" height="1.500" fill="#414556"/><rect x="1912" y="966.9" width="5" height="1.500" fill="#414556"/><rect x="1912" y="969.4" width="5" height="1.500" fill="#414556"/><rect x="1912" y="971.9" width="5" height="1.500" fill="#414556"/><rect x="1912" y="974.4" width="5" height="1.500" fill="#414556"/><rect x="1912" y="976.9" width="5" height="1.500" fill="#414556"/><rect x="1912" y="979.4" width="5" height="1.500" fill="#414556"/><rect x="1912" y="981.9" width="5" height="1.500" fill="#414556"/><rect x="1912" y="984.4" width="5" height="1.500" fill="#414556"/><rect x="1912" y="986.9" width="5" height="1.500" fill="#d8c24a"/><rect x="1912" y="989.4" width="5" height="1.500" fill="#ccc353"/><rect x="1912" y="991.9" width="5" height="1.500" fill="#c0c45c"/><rect x="1912" y="994.4" width="5" height="1.500" fill="#b4c565"/><rect x="1912" y="996.9" width="5" height="1.500" fill="#a8c66e"/><rect x="1912" y="999.4" width="5" height="1.500" fill="#9dc777"/><rect x="1912" y="1001.9" width="5" height="1.500" fill="#91c880"/><rect x="1912" y="1004.4" width="5" height="1.500" fill="#85c989"/><rect x="1912" y="1006.9" width="5" height="1.500" fill="#79ca92"/><rect x="1912" y="1009.4" width="5" height="1.500" fill="#6ecb9b"/><rect x="1912" y="1011.9" width="5" height="1.500" fill="#62cca4"/><rect x="1912" y="1014.4" width="5" height="1.500" fill="#56cdad"/><rect x="1912" y="1016.9" width="5" height="1.500" fill="#4aceb6"/><rect x="1912" y="1019.4" width="5" height="1.500" fill="#3fd0c0"/></svg>
<div class="a" style="left:1789px;top:1037px;width:3px;height:2px;background:#e8e8e8"></div>
<div class="a" style="left:1796px;top:1037px;width:5px;height:2px;background:#e8e8e8"></div>
<div class="a" style="left:1806px;top:1037px;width:2px;height:2px;background:#e8e8e8"></div>
<div class="a" style="left:1812px;top:1037px;width:5px;height:2px;background:#e8e8e8"></div>
<div class="a" style="left:1820px;top:1037px;width:5px;height:2px;background:#e8e8e8"></div>
<div class="t" style="left:1774px;top:1011.5px;font-size:15.5px;color:rgba(135,135,135,.75);text-shadow:0 0 1.5px #fff">CSDN @Carolking</div>
</div>
<!--BOTTOM-->
<!--MENU-->
<div class="a" id="menu" style="left:0;top:0;width:1920px;height:320px">
<div class="a" style="left:794px;top:116px;width:165px;height:181px;background:#fff;border:1px solid #c6c6c6;box-shadow:1px 2px 4px rgba(0,0,0,.25),-2px 0 0 #e3e3e3"></div>
<div class="t" style="left:835px;top:120.5px;color:#444">矩形(<u>R</u>)</div>
<div class="t" style="left:835px;top:150.5px;color:#444">椭圆(<u>E</u>)</div>
<div class="t" style="left:835px;top:180.5px;color:#444">线条(<u>L</u>)</div>
<div class="t" style="left:835px;top:210.5px;color:#444">任意多边形(<u>F</u>)</div>
<div class="t" style="left:835px;top:240.5px;color:#444">弧形(<u>A</u>)</div>
<div class="t" style="left:835px;top:270.5px;color:#444">铅笔(<u>P</u>)</div>
<svg style="left:0;top:0" width="1920" height="320" viewBox="0 0 1920 320" fill="none" stroke="#666" stroke-width="1">
<rect x="801.500" y="122.500" width="17" height="13"/>
<ellipse cx="810" cy="158.600" rx="8.600" ry="7.100"/>
<path d="M801.500 180.500l17.500 17"/>
<path d="M806.500 213c1-2.500 6.500-2.500 7.500.5s-6.500 4-6.500 8 5 4 8 3"/>
<path d="M801.500 242c10 0 17 6 17 14.700"/>
<path d="M803.300 285.600l1.200-3.600 9.300-9.300 2.400 2.400-9.300 9.300z" fill="#3b73b8" stroke="#3b73b8" stroke-width=".8"/>
</svg>
<div class="a" style="left:789px;top:114px;width:173px;height:190px;border:3px solid #f73434"></div>
</div>
</body>
</html>
